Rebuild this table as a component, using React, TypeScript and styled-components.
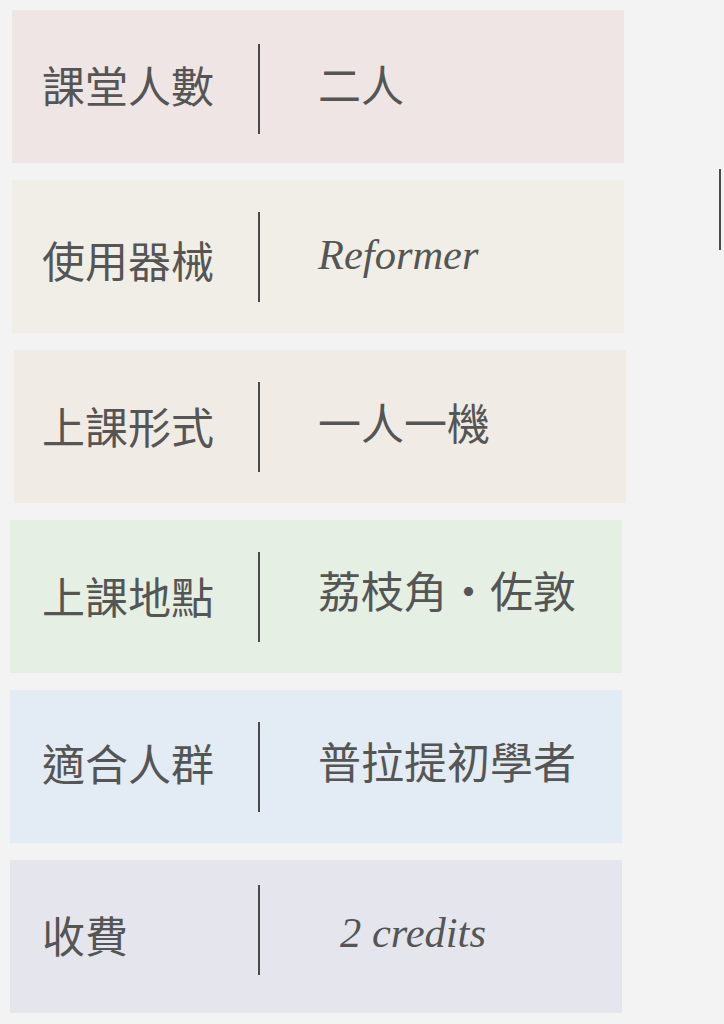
import styled, { createGlobalStyle } from "styled-components";

interface Item {
  label: string;
  value: string;
  bg: string;
  x: number;
  latin?: boolean;
  indent?: number;
  labelDy?: number;
  valueDy?: number;
  ruleDy?: number;
}

const items: Item[] = [
  { label: "課堂人數", value: "二人", bg: "#efe5e4", x: 12, labelDy: -2, valueDy: -3, ruleDy: 2 },
  { label: "使用器械", value: "Reformer", bg: "#f1eee7", x: 12, latin: true, labelDy: 3, valueDy: -1 },
  { label: "上課形式", value: "一人一機", bg: "#f1ebe5", x: 14, labelDy: -1, valueDy: -5 },
  { label: "上課地點", value: "荔枝角・佐敦", bg: "#e5efe4", x: 10, labelDy: -1, valueDy: -7 },
  { label: "適合人群", value: "普拉提初學者", bg: "#e3ebf4", x: 10, labelDy: -4, valueDy: -6 },
  { label: "收費", value: "2 credits", bg: "#e5e5ee", x: 10, latin: true, indent: 22, labelDy: -2, ruleDy: -7, valueDy: -3 },
];

export default function App() {
  return (
    <>
      <GlobalStyle />
      <Page>
        <List>
          {items.map((item, index) => (
            <Row key={`row_${index}`} $bg={item.bg} $x={item.x}>
              <Label $dy={item.labelDy ?? 0}>{item.label}</Label>
              <Rule $dy={item.ruleDy ?? 0} />
              <Value
                $latin={!!item.latin}
                $indent={item.indent ?? 0}
                $dy={item.valueDy ?? 0}
              >
                {item.value}
              </Value>
            </Row>
          ))}
        </List>
        <EdgeMark />
      </Page>
    </>
  );
}

const GlobalStyle = createGlobalStyle`
  html, body {
    margin: 0;
    padding: 0;
    background: #f3f3f3;
  }
  body {
    font-family: "Noto Sans CJK TC", "Noto Sans", sans-serif;
    color: #555555;
  }
`;

const Page = styled.div`
  position: relative;
  width: 724px;
  height: 1024px;
  overflow: hidden;
  background: #f3f3f3;
`;

const List = styled.div`
  display: flex;
  flex-direction: column;
  gap: 17px;
  padding-top: 10px;
`;

const Row = styled.div<{ $bg: string; $x: number }>`
  display: grid;
  grid-template-columns: 216px 2px 1fr;
  align-items: center;
  box-sizing: border-box;
  width: 612px;
  height: 153px;
  margin-left: ${(p) => p.$x}px;
  padding-left: ${(p) => 42 - p.$x}px;
  background: ${(p) => p.$bg};
`;

const Label = styled.div<{ $dy: number }>`
  font-size: 43px;
  line-height: 1;
  white-space: nowrap;
  margin-top: ${(p) => p.$dy * 2}px;
`;

const Rule = styled.div<{ $dy: number }>`
  width: 2px;
  height: 90px;
  background: #4a4a4a;
  margin-top: ${(p) => p.$dy * 2}px;
`;

const Value = styled.div<{ $latin: boolean; $indent: number; $dy: number }>`
  padding-left: ${(p) => 58 + p.$indent}px;
  font-family: ${(p) =>
    p.$latin
      ? `"Liberation Serif", "Times New Roman", serif`
      : `"Noto Sans CJK TC", "Noto Sans", sans-serif`};
  font-style: ${(p) => (p.$latin ? "italic" : "normal")};
  font-size: ${(p) => (p.$latin ? 42.5 : 43)}px;
  line-height: 1;
  white-space: nowrap;
  margin-top: ${(p) => p.$dy * 2}px;
`;

const EdgeMark = styled.div`
  position: absolute;
  left: 719px;
  top: 169px;
  width: 2px;
  height: 81px;
  background: #4a4a4a;
`;
